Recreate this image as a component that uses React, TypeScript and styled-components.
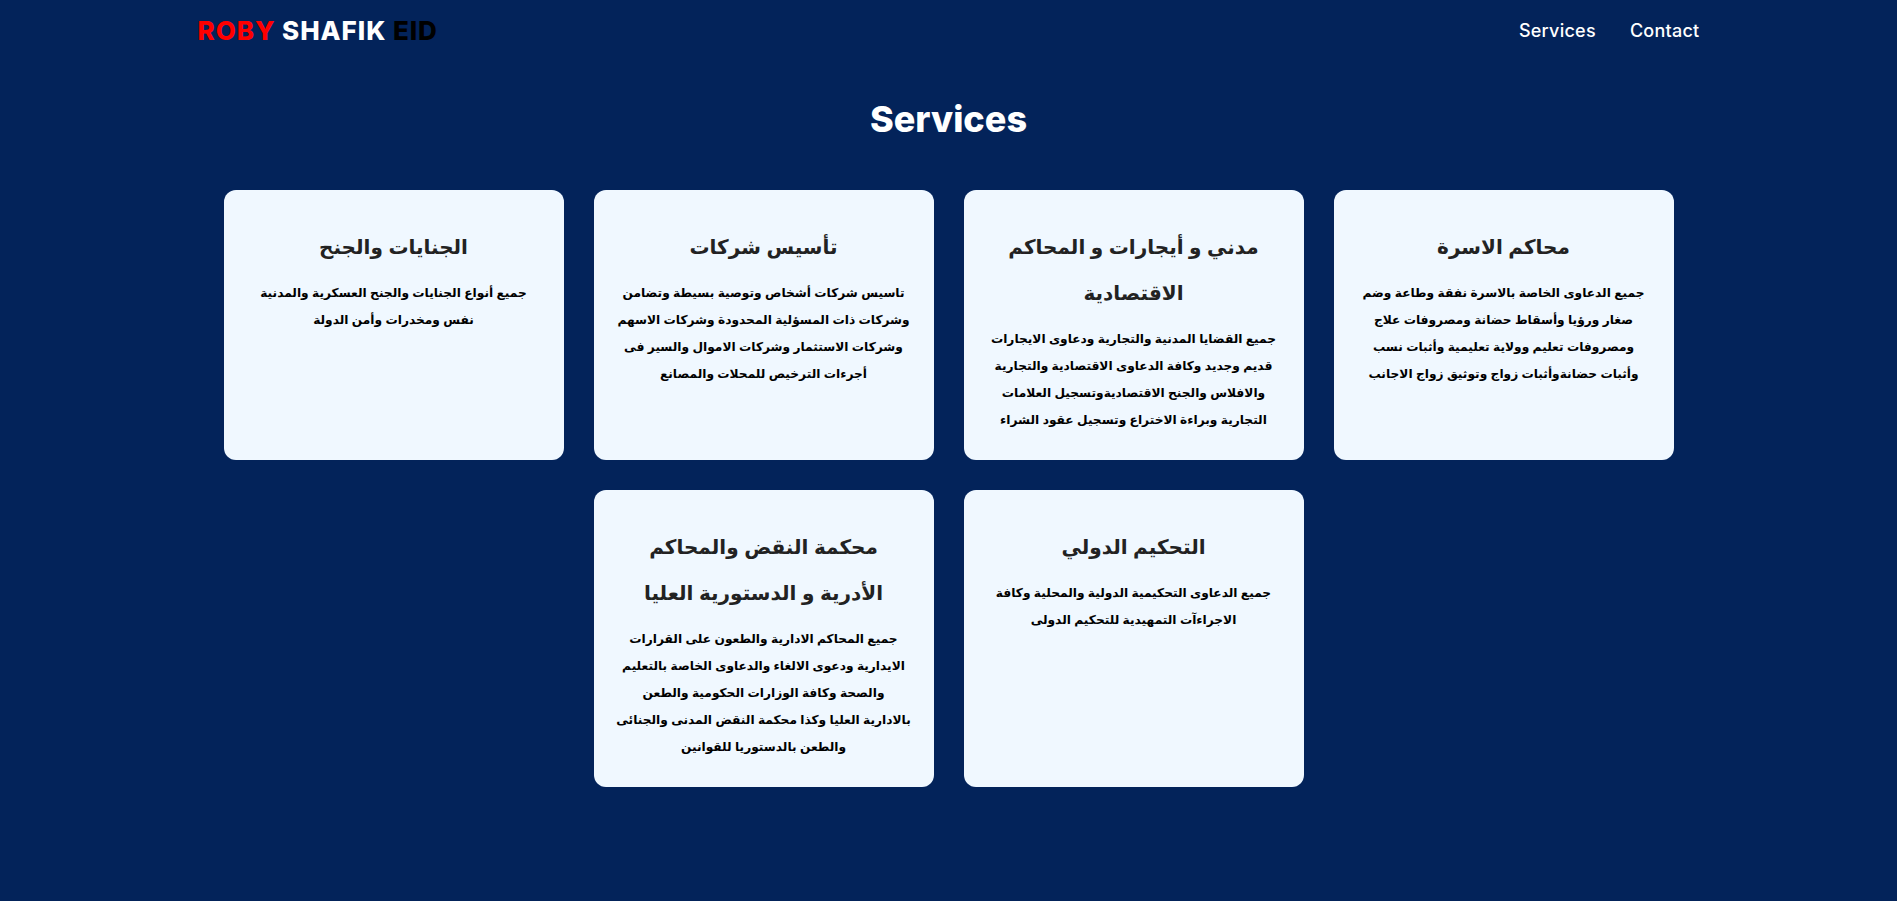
import { createGlobalStyle } from "styled-components";
import styled from "styled-components";

const services = [
	{
		title: "محاكم الاسرة",
		text: "جميع الدعاوى الخاصة بالاسرة نفقة وطاعة وضم\nصغار ورؤيا وأسقاط حضانة ومصروفات علاج\nومصروفات تعليم وولاية تعليمية وأثبات نسب\nوأثبات حضانةوأثبات زواج وتوثيق زواج الاجانب",
	},
	{
		title: "مدني و أيجارات و المحاكم\nالاقتصادية",
		text: "جميع القضايا المدنية والتجارية ودعاوى الايجارات\nقديم وجديد وكافة الدعاوى الاقتصادية والتجارية\nوالافلاس والجنح الاقتصاديةوتسجيل العلامات\nالتجارية وبراءة الاختراع وتسجيل عقود الشراء",
	},
	{
		title: "تأسيس شركات",
		text: "تاسيس شركات أشخاص وتوصية بسيطة وتضامن\nوشركات ذات المسؤلية المحدودة وشركات الاسهم\nوشركات الاستثمار وشركات الاموال والسير فى\nأجرءات الترخيص للمحلات والمصانع",
	},
	{
		title: "الجنايات والجنح",
		text: "جميع أنواع الجنايات والجنح العسكرية والمدنية\nنفس ومخدرات وأمن الدولة",
	},
	{
		title: "التحكيم الدولي",
		text: "جميع الدعاوى التحكيمية الدولية والمحلية وكافة\nالاجراءآت التمهيدية للتحكيم الدولى",
	},
	{
		title: "محكمة النقض والمحاكم\nالأدرية و الدستورية العليا",
		text: "جميع المحاكم الادارية والطعون على القرارات\nالايدارية ودعوى الالغاء والدعاوى الخاصة بالتعليم\nوالصحة وكافة الوزارات الحكومية والطعن\nبالادارية العليا وكذا محكمة النقض المدنى والجنائى\nوالطعن بالدستوريا للقوانين",
	},
];

function App() {
	return (
		<>
			<GlobalStyle />
			<Page>
				<Header>
					<Logo>
						<LogoPart color="#ff0000">ROBY</LogoPart> <LogoPart color="#ffffff">SHAFIK</LogoPart>{" "}
						<LogoPart color="#000000">EID</LogoPart>
					</Logo>
					<Nav>
						<NavLink href="#services">Services</NavLink>
						<NavLink href="#contact">Contact</NavLink>
					</Nav>
				</Header>
				<Section id="services">
					<Heading>Services</Heading>
					<CardList>
						{services.map((service) => (
							<Card key={service.title}>
								<CardTitle>{service.title}</CardTitle>
								<CardText>{service.text}</CardText>
							</Card>
						))}
					</CardList>
				</Section>
			</Page>
		</>
	);
}

const GlobalStyle = createGlobalStyle`
	* {
		box-sizing: border-box;
	}

	body {
		margin: 0;
		background: #03235a;
		font-family: Inter, "Liberation Sans", "DejaVu Sans", sans-serif;
	}
`;

const Page = styled.div`
	min-height: 901px;
	background: #03235a;
`;

const Header = styled.header`
	width: 1502px;
	height: 60px;
	margin: 0 auto;
	display: flex;
	justify-content: space-between;
	align-items: center;
`;

const Logo = styled.div`
	font-size: 26px;
	font-weight: 800;
	letter-spacing: 0.95px;
	white-space: nowrap;
`;

const LogoPart = styled.span<{ color: string }>`
	color: ${({ color }) => color};
`;

const Nav = styled.nav`
	display: flex;
	gap: 34px;
`;

const NavLink = styled.a`
	color: #fff;
	font-size: 18px;
	font-weight: 500;
	letter-spacing: 0.25px;
	text-decoration: none;
`;

const Section = styled.section`
	display: flex;
	flex-direction: column;
	align-items: center;
	padding-top: 32px;
`;

const Heading = styled.h1`
	margin: 0 0 44px;
	color: #fff;
	font-size: 36px;
	font-weight: 800;
	line-height: 54px;
`;

const CardList = styled.div`
	width: 1460px;
	display: flex;
	flex-flow: row-reverse wrap;
	justify-content: center;
	gap: 30px;
`;

const Card = styled.article`
	width: 340px;
	padding: 34px 10px 26px;
	border-radius: 12px;
	background: #f0f8ff;
	text-align: center;
`;

const CardTitle = styled.h3`
	margin: 0 0 10px;
	color: #222;
	font-family: "Liberation Sans", "DejaVu Sans", sans-serif;
	font-size: 20px;
	font-weight: 700;
	line-height: 46px;
	white-space: pre-line;
`;

const CardText = styled.p`
	margin: 0;
	color: #000;
	font-family: "Liberation Sans", "DejaVu Sans", sans-serif;
	font-size: 12.2px;
	font-weight: 700;
	line-height: 27px;
	white-space: pre-line;
`;

export default App;
